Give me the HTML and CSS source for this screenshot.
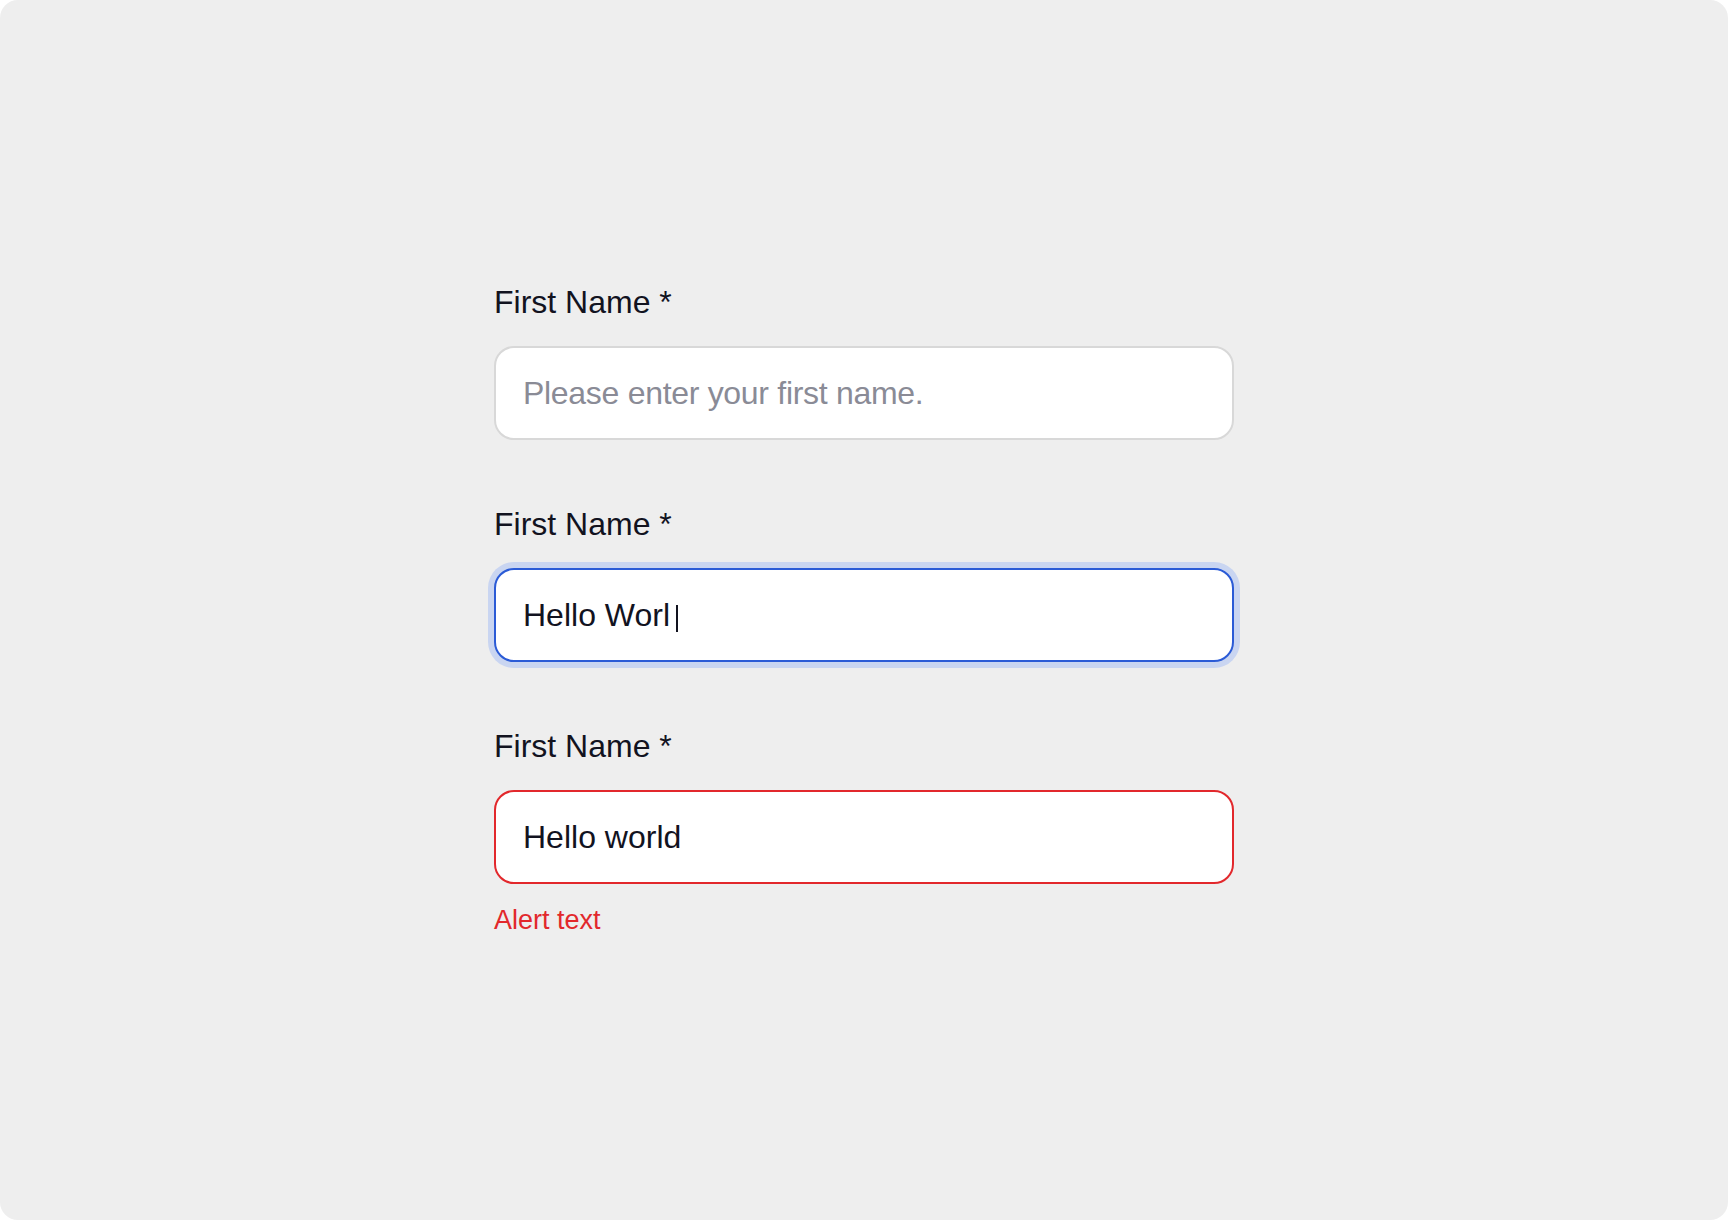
FILE: index.html
```html
<!DOCTYPE html>
<html lang="en">
<head>
    <meta charset="UTF-8">
    <meta name="viewport" content="width=device-width, initial-scale=1.0">
    <title>Text Field States</title>
    <link rel="stylesheet" href="styles.css">
</head>
<body>
    <div class="canvas">
        <div class="form">
            <div class="field">
                <label class="field-label">First Name *</label>
                <div class="field-box">
                    <span class="placeholder">Please enter your first name.</span>
                </div>
            </div>

            <div class="field">
                <label class="field-label">First Name *</label>
                <div class="field-box focused">
                    <span>Hello Worl</span><span class="caret"></span>
                </div>
            </div>

            <div class="field">
                <label class="field-label">First Name *</label>
                <div class="field-box error">
                    <span>Hello world</span>
                </div>
                <p class="alert">Alert text</p>
            </div>
        </div>
    </div>
</body>
</html>
```

FILE: styles.css
```css
* { box-sizing: border-box; }
body { margin: 0; background: #ffffff; font-family: "Liberation Sans", Arial, sans-serif; color: #12131f; }
.canvas {
    width: 1728px; height: 1220px;
    background: #eeeeee; border-radius: 18px;
    display: flex; justify-content: center; align-items: center;
}
.form { width: 740px; display: flex; flex-direction: column; gap: 64px; }
.field { display: flex; flex-direction: column; }
.field-label { font-size: 32px; line-height: 40px; margin-bottom: 24px; }
.field-box {
    height: 94px; display: flex; align-items: center;
    padding: 0 27px; background: #ffffff;
    border: 2px solid #d8d8d8; border-radius: 20px;
    font-size: 32px; line-height: 40px;
}
.placeholder { color: #8a8b96; letter-spacing: -0.3px; }
.field-box.focused { border-color: #2b5bd6; box-shadow: 0 0 0 6px #c9d5f1; }
.field-box.error { border-color: #e2282c; }
.caret { display: inline-block; width: 2px; height: 27px; background: #12131f; margin-left: 6px; transform: translateY(3px); }
.alert { margin: 18px 0 0; font-size: 27px; line-height: 36px; color: #e2282c; }
```
